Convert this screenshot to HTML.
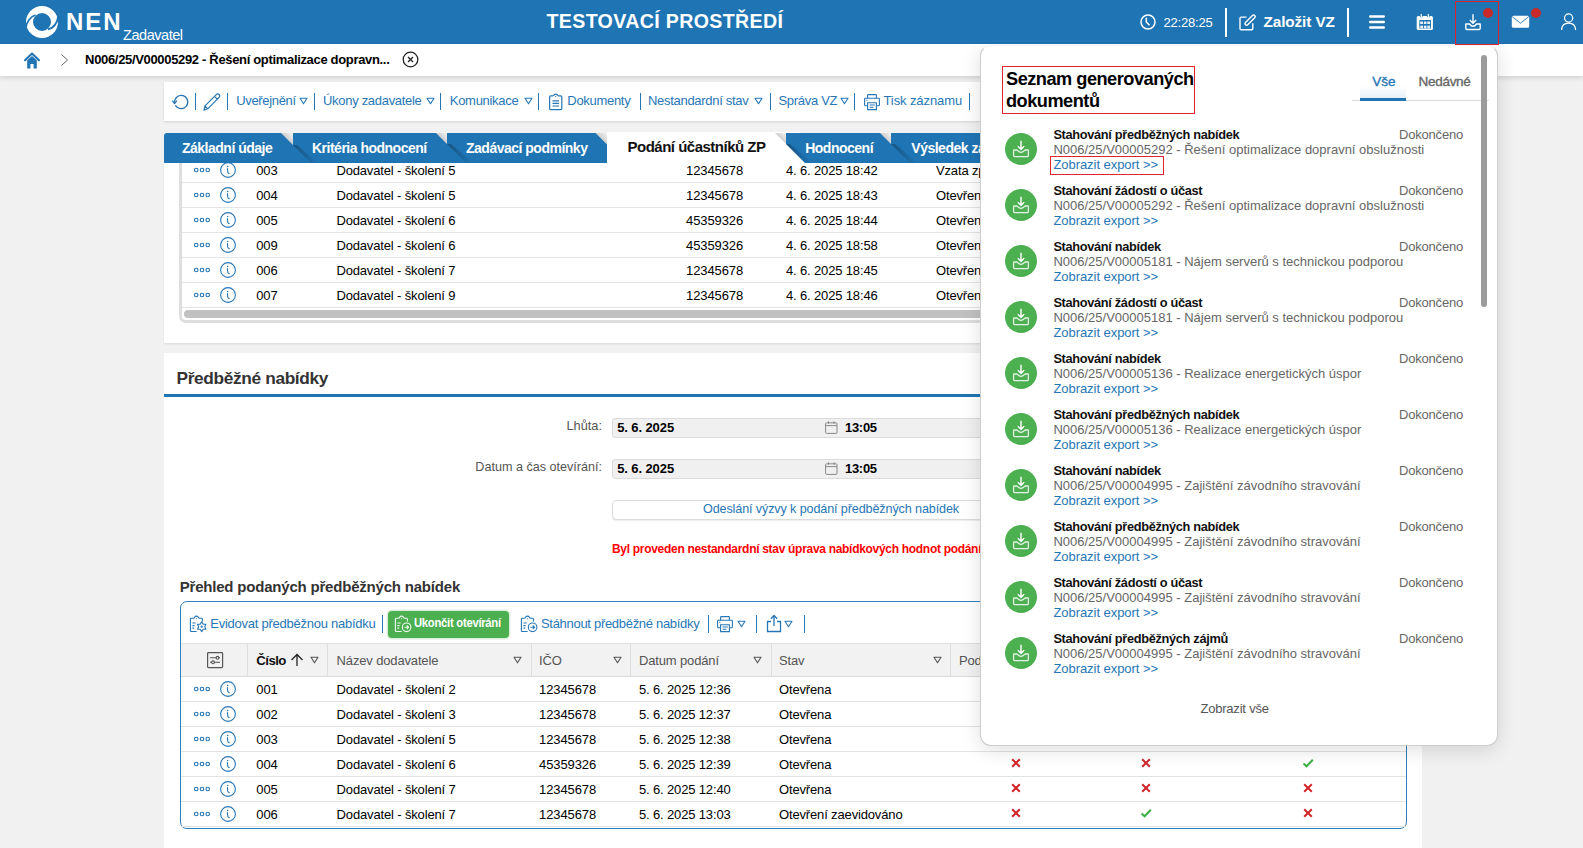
<!DOCTYPE html>
<html><head><meta charset="utf-8">
<style>
*{box-sizing:border-box;margin:0;padding:0}
html,body{width:1583px;height:848px;overflow:hidden}
body{background:#f1f1f1;font-family:"Liberation Sans",sans-serif;font-size:13px;color:#000;position:relative}
.a{position:absolute;white-space:nowrap;line-height:16px}
svg.a{overflow:visible}
.b{font-weight:bold}
.lk{color:#2777b6}
.sep{position:absolute;width:2px;background:#2777b6}
.rl{position:absolute;height:1px;background:#e3e3e3}
</style></head><body>
<div style="position:absolute;left:0;top:0;width:1583px;height:44px;background:#1f74b4"></div>
<svg class="a" style="left:0;top:0" width="70" height="44" viewBox="0 0 70 44">
<circle cx="42" cy="22" r="12.5" fill="none" stroke="#fff" stroke-width="7"/>
<path d="M25.8,28 C27,20.5 30.5,16.8 35.5,15" fill="none" stroke="#1f74b4" stroke-width="1.8"/>
<path d="M58.2,16.5 C57,24 53,28.2 48,29.3" fill="none" stroke="#1f74b4" stroke-width="1.8"/>
</svg>
<div class="a b" style="left:66.00px;top:9.68px;font-size:24px;line-height:24px;color:#fff;letter-spacing:1.9px">NEN</div>
<div class="a " style="left:123.00px;top:27.93px;font-size:14.5px;line-height:14.5px;color:#fff;letter-spacing:-0.45px">Zadavatel</div>
<div class="a b" style="left:546.50px;top:12.41px;font-size:19.6px;line-height:19.6px;color:#fff;letter-spacing:0.35px">TESTOVACÍ PROSTŘEDÍ</div>
<svg class="a" style="left:1139px;top:13px" width="18" height="18" viewBox="0 0 18 18">
<circle cx="9" cy="9" r="7" fill="none" stroke="#fff" stroke-width="1.5"/>
<path d="M7.3,4.8 L7.3,9 L10.5,12.2" fill="none" stroke="#fff" stroke-width="1.5"/>
</svg>
<div class="a " style="left:1163.50px;top:16.20px;font-size:13px;line-height:13px;color:#fff;letter-spacing:-0.2px">22:28:25</div>
<div class="sep" style="left:1225px;top:8px;height:29px;background:#fff"></div>
<svg class="a" style="left:1238px;top:13px" width="18" height="18" viewBox="0 0 18 18">
<path d="M8.5,4.1 H3.2 Q2,4.1 2,5.3 V15.6 Q2,16.8 3.2,16.8 H13.6 Q14.8,16.8 14.8,15.6 V10.2" fill="none" stroke="#fff" stroke-width="1.4"/>
<path d="M8.6,10.6 L15.6,3.6" stroke="#fff" stroke-width="4.6" stroke-linecap="round"/>
<path d="M8.6,10.6 L15.6,3.6" stroke="#1f74b4" stroke-width="1.8" stroke-linecap="round"/>
</svg>
<div class="a b" style="left:1263.50px;top:14.25px;font-size:15.3px;line-height:15.3px;color:#fff;letter-spacing:-0.1px">Založit VZ</div>
<div class="sep" style="left:1347px;top:8px;height:29px;background:#fff"></div>
<svg class="a" style="left:1368px;top:14px" width="18" height="16" viewBox="0 0 18 16">
<path d="M2.2,2.5 H15.8 M2.2,8 H15.8 M2.2,13.5 H15.8" stroke="#fff" stroke-width="2.4" stroke-linecap="round"/>
</svg>
<svg class="a" style="left:1416px;top:13px" width="18" height="18" viewBox="0 0 18 18">
<rect x="0.7" y="2.9" width="16.2" height="14.2" rx="1.5" fill="#fff"/>
<rect x="3.4" y="7" width="11.6" height="8.5" fill="#1f74b4"/>
<rect x="3.9" y="0.6" width="2.6" height="3.6" fill="#1f74b4"/>
<rect x="11" y="0.6" width="2.6" height="3.6" fill="#1f74b4"/>
<rect x="4.6" y="1" width="1.2" height="3.8" fill="#fff"/>
<rect x="11.7" y="1" width="1.2" height="3.8" fill="#fff"/>
<path d="M4.2,9.8 H7 M7.9,9.8 H10.5 M11.3,9.8 H14.1 M4.2,13.9 H7 M7.9,13.9 H10.5 M11.3,13.9 H14.1" stroke="#fff" stroke-opacity=".9" stroke-width="2.6"/>
<path d="M3.4,11.8 H15" stroke="#1f74b4" stroke-width="1"/>
</svg>
<div style="position:absolute;left:1455px;top:1px;width:44px;height:44px;border:1.5px solid #e0232d;z-index:20"></div>
<svg class="a" style="left:1464px;top:13px" width="18" height="18" viewBox="0 0 18 18">
<path d="M9,1.2 V10 M5.8,7 L9,10.2 L12.2,7" fill="none" stroke="#fff" stroke-width="1.4"/>
<path d="M1.8,11 V15.2 Q1.8,16.5 3,16.5 H15 Q16.2,16.5 16.2,15.2 V11 H12.5 Q11,13.3 9,13.3 Q7,13.3 5.5,11 Z" fill="none" stroke="#fff" stroke-width="1.4" stroke-linejoin="round"/>
</svg>
<div style="position:absolute;left:1483px;top:8px;width:10px;height:10px;border-radius:50%;background:#c92a2a"></div>
<svg class="a" style="left:1511px;top:15px" width="19" height="14" viewBox="0 0 19 14">
<rect x="0.8" y="0.8" width="17.4" height="12" rx="1.6" fill="#fff"/>
<path d="M1.2,1.6 L9.5,8.2 L17.8,1.6" fill="none" stroke="#1f74b4" stroke-width="0.9"/>
</svg>
<div style="position:absolute;left:1531px;top:8px;width:10px;height:10px;border-radius:50%;background:#c92a2a"></div>
<svg class="a" style="left:1560px;top:13px" width="18" height="18" viewBox="0 0 18 18">
<circle cx="8.6" cy="5" r="4.1" fill="none" stroke="#fff" stroke-width="1.2"/>
<path d="M1.6,17 Q1.9,10.2 8.6,10.2 Q15.3,10.2 15.6,17" fill="none" stroke="#fff" stroke-width="1.2"/>
</svg>
<div style="position:absolute;left:0;top:44px;width:1583px;height:32px;background:#fff;box-shadow:0 2px 5px rgba(0,0,0,.13)"></div>
<svg class="a" style="left:24px;top:51.5px" width="16" height="17" viewBox="0 0 16 17">
<path d="M1,8.2 L8,1.6 L15,8.2" fill="none" stroke="#1f74b4" stroke-width="2.1" stroke-linejoin="round" stroke-linecap="round"/>
<path d="M3.2,8.3 L8,4 L12.8,8.3 V16.5 H9.6 V12 H6.4 V16.5 H3.2 Z" fill="#1f74b4"/>
</svg>
<svg class="a" style="left:60px;top:53px" width="10" height="14" viewBox="0 0 10 14">
<path d="M1.5,1.5 L7.5,7 L1.5,12.5" fill="none" stroke="#666" stroke-width="1"/>
</svg>
<div class="a b" style="left:85.10px;top:53.40px;font-size:13px;line-height:13px;letter-spacing:-0.33px">N006/25/V00005292 - Řešení optimalizace dopravn...</div>
<svg class="a" style="left:402px;top:51px" width="17" height="17" viewBox="0 0 17 17">
<circle cx="8.5" cy="8.5" r="7.3" fill="none" stroke="#222" stroke-width="1.3"/>
<path d="M6,6 L11,11 M11,6 L6,11" stroke="#222" stroke-width="1.3"/>
</svg>
<div style="position:absolute;left:164px;top:82px;width:1258px;height:39px;background:#fff;box-shadow:0 1px 2px rgba(0,0,0,.12)"></div>
<svg class="a" style="left:170px;top:92px" width="20" height="20" viewBox="0 0 20 20">
<path d="M5.4,13.2 A6.6,6.6 0 1 0 4.6,10.6" fill="none" stroke="#2777b6" stroke-width="1.3"/>
<path d="M2.3,8.7 L4.6,11.6 L6.9,8.7" fill="none" stroke="#2777b6" stroke-width="1.3" stroke-linejoin="round"/>
</svg>
<div class="sep" style="left:195px;top:93px;height:17px;width:1.2px"></div>
<svg class="a" style="left:202px;top:92px" width="20" height="20" viewBox="0 0 20 20">
<path d="M2,18.2 L3,13.8 L14.5,2.3 Q15.8,1.2 17.2,2.5 Q18.4,3.8 17.3,5.2 L5.8,16.8 Z M12.5,4.3 L15.5,7.3 M3,13.8 L5.8,16.8" fill="none" stroke="#2777b6" stroke-width="1.2" stroke-linejoin="round"/>
</svg>
<div class="sep" style="left:227px;top:93px;height:17px;width:1.2px"></div>
<div class="a " style="left:236.30px;top:94.20px;font-size:13px;line-height:13px;color:#2777b6;letter-spacing:-0.35px">Uveřejnění</div>
<svg class="a" style="left:299px;top:96.8px" width="9" height="8" viewBox="0 0 9 8"><path d="M1,1.2 H8 L4.5,6.8 Z" fill="none" stroke="#2777b6" stroke-width="1.1" stroke-linejoin="round"/></svg>
<div class="sep" style="left:314px;top:93px;height:17px;width:1.2px"></div>
<div class="a " style="left:323.00px;top:94.20px;font-size:13px;line-height:13px;color:#2777b6;letter-spacing:-0.3px">Úkony zadavatele</div>
<svg class="a" style="left:425.5px;top:96.8px" width="9" height="8" viewBox="0 0 9 8"><path d="M1,1.2 H8 L4.5,6.8 Z" fill="none" stroke="#2777b6" stroke-width="1.1" stroke-linejoin="round"/></svg>
<div class="sep" style="left:440px;top:93px;height:17px;width:1.2px"></div>
<div class="a " style="left:449.80px;top:94.20px;font-size:13px;line-height:13px;color:#2777b6;letter-spacing:-0.3px">Komunikace</div>
<svg class="a" style="left:523.5px;top:96.8px" width="9" height="8" viewBox="0 0 9 8"><path d="M1,1.2 H8 L4.5,6.8 Z" fill="none" stroke="#2777b6" stroke-width="1.1" stroke-linejoin="round"/></svg>
<div class="sep" style="left:538px;top:93px;height:17px;width:1.2px"></div>
<svg class="a" style="left:546px;top:92px" width="18" height="20" viewBox="0 0 18 20">
<path d="M6.8,3.9 H4.6 Q3.6,3.9 3.6,4.9 V16.8 Q3.6,17.6 4.6,17.6 H15 Q15.8,17.6 15.8,16.8 V4.9 Q15.8,3.9 14.8,3.9 H12.6 Q12,3.8 11.5,3 Q10.6,2.2 9.7,2.2 Q8.8,2.2 8,3 Q7.5,3.8 6.8,3.9 Z" fill="none" stroke="#2777b6" stroke-width="1.2"/>
<circle cx="9.7" cy="4.6" r="0.6" fill="#2777b6"/>
<path d="M6.5,8.9 H13 M6.5,11.4 H13 M6.5,14 H13" stroke="#2777b6" stroke-width="1.1"/>
</svg>
<div class="a " style="left:567.30px;top:94.20px;font-size:13px;line-height:13px;color:#2777b6;letter-spacing:-0.3px">Dokumenty</div>
<div class="sep" style="left:639.5px;top:93px;height:17px;width:1.2px"></div>
<div class="a " style="left:648.00px;top:94.20px;font-size:13px;line-height:13px;color:#2777b6;letter-spacing:-0.3px">Nestandardní stav</div>
<svg class="a" style="left:753.5px;top:96.8px" width="9" height="8" viewBox="0 0 9 8"><path d="M1,1.2 H8 L4.5,6.8 Z" fill="none" stroke="#2777b6" stroke-width="1.1" stroke-linejoin="round"/></svg>
<div class="sep" style="left:769.5px;top:93px;height:17px;width:1.2px"></div>
<div class="a " style="left:778.50px;top:94.20px;font-size:13px;line-height:13px;color:#2777b6;letter-spacing:-0.3px">Správa VZ</div>
<svg class="a" style="left:840px;top:96.8px" width="9" height="8" viewBox="0 0 9 8"><path d="M1,1.2 H8 L4.5,6.8 Z" fill="none" stroke="#2777b6" stroke-width="1.1" stroke-linejoin="round"/></svg>
<div class="sep" style="left:854.2px;top:93px;height:17px;width:1.2px"></div>
<svg class="a" style="left:863px;top:93px" width="18" height="18" viewBox="0 0 18 18">
<path d="M4.6,5.2 V2.2 Q4.6,1.6 5.2,1.6 H12.8 Q13.4,1.6 13.4,2.2 V5.2" fill="none" stroke="#2777b6" stroke-width="1.1"/>
<path d="M4.4,12.8 H2.4 Q1.6,12.8 1.6,12 V6 Q1.6,5.2 2.4,5.2 H15.6 Q16.4,5.2 16.4,6 V12 Q16.4,12.8 15.6,12.8 H13.6" fill="none" stroke="#2777b6" stroke-width="1.1"/>
<path d="M4.6,9.8 H13.4 V16.6 H4.6 Z" fill="none" stroke="#2777b6" stroke-width="1.1"/>
<path d="M6.6,12 H11.8 M6.6,14.3 H10.4 M3.2,7.3 H4.4" stroke="#2777b6" stroke-width="1"/>
</svg>
<div class="a " style="left:883.50px;top:94.20px;font-size:13px;line-height:13px;color:#2777b6;letter-spacing:-0.1px">Tisk záznamu</div>
<div class="sep" style="left:969.2px;top:93px;height:17px;width:1.2px"></div>
<svg class="a" style="left:0;top:0" width="1583" height="170" viewBox="0 0 1583 170"><defs><linearGradient id="ng" x1="1" y1="0" x2="0.5" y2="0.5"><stop offset="0" stop-color="#f3f3f3"/><stop offset="1" stop-color="#cfcfcf"/></linearGradient><linearGradient id="sh" x1="0" y1="0" x2="1" y2="0"><stop offset="0" stop-color="#000" stop-opacity="0.28"/><stop offset="1" stop-color="#000" stop-opacity="0"/></linearGradient></defs><path d="M164,136 Q164,133 167,133 L306,133 L336,163 L164,163 Z" fill="#1f74b4"/><path d="M293,133 L461,133 L491,163 L312,163 L293,144 Z" fill="#1f74b4"/><path d="M281,133 L293,133 L293,145 Z" fill="url(#ng)"/><path d="M293,145 L311,163 L318,163 L297,145 Z" fill="url(#sh)"/><path d="M447,133 L620.5,133 L650.5,163 L466,163 L447,144 Z" fill="#1f74b4"/><path d="M436,133 L447,133 L447,144 Z" fill="url(#ng)"/><path d="M447,144 L466,163 L473,163 L451,144 Z" fill="url(#sh)"/><path d="M607,132 L800,132 L831,163 L607,163 Z" fill="#ffffff"/><path d="M595.5,133 L607,133 L607,144.5 Z" fill="url(#ng)"/><path d="M786,133 L905,133 L935,163 L805,163 L786,144 Z" fill="#1f74b4"/><path d="M775,133 L786,133 L786,144 Z" fill="url(#ng)"/><path d="M786,144 L805,163 L812,163 L790,144 Z" fill="url(#sh)"/><path d="M891,133 L1125,133 L1155,163 L910,163 L891,144 Z" fill="#1f74b4"/><path d="M880,133 L891,133 L891,144 Z" fill="url(#ng)"/><path d="M891,144 L910,163 L917,163 L895,144 Z" fill="url(#sh)"/></svg>
<div class="a b" style="left:182.00px;top:141.15px;font-size:14px;line-height:14px;color:#fff;letter-spacing:-0.5px">Základní údaje</div>
<div class="a b" style="left:312.00px;top:141.15px;font-size:14px;line-height:14px;color:#fff;letter-spacing:-0.5px">Kritéria hodnocení</div>
<div class="a b" style="left:466.00px;top:141.15px;font-size:14px;line-height:14px;color:#fff;letter-spacing:-0.5px">Zadávací podmínky</div>
<div class="a b" style="left:627.50px;top:139.30px;font-size:15px;line-height:15px;color:#111;letter-spacing:-0.5px">Podání účastníků ZP</div>
<div class="a b" style="left:805.20px;top:141.15px;font-size:14px;line-height:14px;color:#fff;letter-spacing:-0.5px">Hodnocení</div>
<div class="a b" style="left:911.30px;top:141.15px;font-size:14px;line-height:14px;color:#fff;letter-spacing:-0.5px">Výsledek zadávacího řízení</div>
<div style="position:absolute;left:164px;top:163px;width:1258px;height:180px;background:#fff;box-shadow:0 1px 2px rgba(0,0,0,.1)"></div>
<div style="position:absolute;left:178.5px;top:163px;width:1230px;height:159.5px;border:3px solid #dedede;border-top:none;border-radius:0 0 7px 7px"></div>
<div style="position:absolute;left:184px;top:310px;width:1220px;height:8px;border-radius:4px;background:#c1c1c1"></div>
<svg class="a" style="left:190px;top:160px" width="50" height="20" viewBox="0 0 50 20"><circle cx="6.2" cy="10" r="1.75" fill="none" stroke="#2777b6" stroke-width="1.15"/><circle cx="12" cy="10" r="1.75" fill="none" stroke="#2777b6" stroke-width="1.15"/><circle cx="17.7" cy="10" r="1.75" fill="none" stroke="#2777b6" stroke-width="1.15"/><circle cx="38" cy="10" r="7.4" fill="none" stroke="#2777b6" stroke-width="1.1"/><circle cx="37.7" cy="6.4" r="0.75" fill="#2777b6"/><path d="M37.4,8.6 Q37.6,11 37.8,12.2 Q38.2,13.3 39.2,13.6" fill="none" stroke="#2777b6" stroke-width="1.1" stroke-linecap="round"/></svg>
<div class="a " style="left:256.20px;top:164.20px;font-size:13px;line-height:13px;letter-spacing:-0.1px">003</div>
<div class="a " style="left:336.40px;top:164.20px;font-size:13px;line-height:13px;letter-spacing:-0.15px">Dodavatel - školení 5</div>
<div class="a " style="left:686.00px;top:164.20px;font-size:13px;line-height:13px;letter-spacing:-0.1px">12345678</div>
<div class="a " style="left:786.00px;top:164.20px;font-size:13px;line-height:13px;letter-spacing:-0.15px">4. 6. 2025 18:42</div>
<div class="a " style="left:936.00px;top:164.20px;font-size:13px;line-height:13px;letter-spacing:-0.15px">Vzata zpět</div>
<div class="rl" style="left:181.5px;top:182px;width:1224px;background:#e4e4e4"></div>
<svg class="a" style="left:190px;top:185px" width="50" height="20" viewBox="0 0 50 20"><circle cx="6.2" cy="10" r="1.75" fill="none" stroke="#2777b6" stroke-width="1.15"/><circle cx="12" cy="10" r="1.75" fill="none" stroke="#2777b6" stroke-width="1.15"/><circle cx="17.7" cy="10" r="1.75" fill="none" stroke="#2777b6" stroke-width="1.15"/><circle cx="38" cy="10" r="7.4" fill="none" stroke="#2777b6" stroke-width="1.1"/><circle cx="37.7" cy="6.4" r="0.75" fill="#2777b6"/><path d="M37.4,8.6 Q37.6,11 37.8,12.2 Q38.2,13.3 39.2,13.6" fill="none" stroke="#2777b6" stroke-width="1.1" stroke-linecap="round"/></svg>
<div class="a " style="left:256.20px;top:189.20px;font-size:13px;line-height:13px;letter-spacing:-0.1px">004</div>
<div class="a " style="left:336.40px;top:189.20px;font-size:13px;line-height:13px;letter-spacing:-0.15px">Dodavatel - školení 5</div>
<div class="a " style="left:686.00px;top:189.20px;font-size:13px;line-height:13px;letter-spacing:-0.1px">12345678</div>
<div class="a " style="left:786.00px;top:189.20px;font-size:13px;line-height:13px;letter-spacing:-0.15px">4. 6. 2025 18:43</div>
<div class="a " style="left:936.00px;top:189.20px;font-size:13px;line-height:13px;letter-spacing:-0.15px">Otevřena</div>
<div class="rl" style="left:181.5px;top:207px;width:1224px;background:#e4e4e4"></div>
<svg class="a" style="left:190px;top:210px" width="50" height="20" viewBox="0 0 50 20"><circle cx="6.2" cy="10" r="1.75" fill="none" stroke="#2777b6" stroke-width="1.15"/><circle cx="12" cy="10" r="1.75" fill="none" stroke="#2777b6" stroke-width="1.15"/><circle cx="17.7" cy="10" r="1.75" fill="none" stroke="#2777b6" stroke-width="1.15"/><circle cx="38" cy="10" r="7.4" fill="none" stroke="#2777b6" stroke-width="1.1"/><circle cx="37.7" cy="6.4" r="0.75" fill="#2777b6"/><path d="M37.4,8.6 Q37.6,11 37.8,12.2 Q38.2,13.3 39.2,13.6" fill="none" stroke="#2777b6" stroke-width="1.1" stroke-linecap="round"/></svg>
<div class="a " style="left:256.20px;top:214.20px;font-size:13px;line-height:13px;letter-spacing:-0.1px">005</div>
<div class="a " style="left:336.40px;top:214.20px;font-size:13px;line-height:13px;letter-spacing:-0.15px">Dodavatel - školení 6</div>
<div class="a " style="left:686.00px;top:214.20px;font-size:13px;line-height:13px;letter-spacing:-0.1px">45359326</div>
<div class="a " style="left:786.00px;top:214.20px;font-size:13px;line-height:13px;letter-spacing:-0.15px">4. 6. 2025 18:44</div>
<div class="a " style="left:936.00px;top:214.20px;font-size:13px;line-height:13px;letter-spacing:-0.15px">Otevřena</div>
<div class="rl" style="left:181.5px;top:232px;width:1224px;background:#e4e4e4"></div>
<svg class="a" style="left:190px;top:235px" width="50" height="20" viewBox="0 0 50 20"><circle cx="6.2" cy="10" r="1.75" fill="none" stroke="#2777b6" stroke-width="1.15"/><circle cx="12" cy="10" r="1.75" fill="none" stroke="#2777b6" stroke-width="1.15"/><circle cx="17.7" cy="10" r="1.75" fill="none" stroke="#2777b6" stroke-width="1.15"/><circle cx="38" cy="10" r="7.4" fill="none" stroke="#2777b6" stroke-width="1.1"/><circle cx="37.7" cy="6.4" r="0.75" fill="#2777b6"/><path d="M37.4,8.6 Q37.6,11 37.8,12.2 Q38.2,13.3 39.2,13.6" fill="none" stroke="#2777b6" stroke-width="1.1" stroke-linecap="round"/></svg>
<div class="a " style="left:256.20px;top:239.20px;font-size:13px;line-height:13px;letter-spacing:-0.1px">009</div>
<div class="a " style="left:336.40px;top:239.20px;font-size:13px;line-height:13px;letter-spacing:-0.15px">Dodavatel - školení 6</div>
<div class="a " style="left:686.00px;top:239.20px;font-size:13px;line-height:13px;letter-spacing:-0.1px">45359326</div>
<div class="a " style="left:786.00px;top:239.20px;font-size:13px;line-height:13px;letter-spacing:-0.15px">4. 6. 2025 18:58</div>
<div class="a " style="left:936.00px;top:239.20px;font-size:13px;line-height:13px;letter-spacing:-0.15px">Otevřena</div>
<div class="rl" style="left:181.5px;top:257px;width:1224px;background:#e4e4e4"></div>
<svg class="a" style="left:190px;top:260px" width="50" height="20" viewBox="0 0 50 20"><circle cx="6.2" cy="10" r="1.75" fill="none" stroke="#2777b6" stroke-width="1.15"/><circle cx="12" cy="10" r="1.75" fill="none" stroke="#2777b6" stroke-width="1.15"/><circle cx="17.7" cy="10" r="1.75" fill="none" stroke="#2777b6" stroke-width="1.15"/><circle cx="38" cy="10" r="7.4" fill="none" stroke="#2777b6" stroke-width="1.1"/><circle cx="37.7" cy="6.4" r="0.75" fill="#2777b6"/><path d="M37.4,8.6 Q37.6,11 37.8,12.2 Q38.2,13.3 39.2,13.6" fill="none" stroke="#2777b6" stroke-width="1.1" stroke-linecap="round"/></svg>
<div class="a " style="left:256.20px;top:264.20px;font-size:13px;line-height:13px;letter-spacing:-0.1px">006</div>
<div class="a " style="left:336.40px;top:264.20px;font-size:13px;line-height:13px;letter-spacing:-0.15px">Dodavatel - školení 7</div>
<div class="a " style="left:686.00px;top:264.20px;font-size:13px;line-height:13px;letter-spacing:-0.1px">12345678</div>
<div class="a " style="left:786.00px;top:264.20px;font-size:13px;line-height:13px;letter-spacing:-0.15px">4. 6. 2025 18:45</div>
<div class="a " style="left:936.00px;top:264.20px;font-size:13px;line-height:13px;letter-spacing:-0.15px">Otevřena</div>
<div class="rl" style="left:181.5px;top:282px;width:1224px;background:#e4e4e4"></div>
<svg class="a" style="left:190px;top:285px" width="50" height="20" viewBox="0 0 50 20"><circle cx="6.2" cy="10" r="1.75" fill="none" stroke="#2777b6" stroke-width="1.15"/><circle cx="12" cy="10" r="1.75" fill="none" stroke="#2777b6" stroke-width="1.15"/><circle cx="17.7" cy="10" r="1.75" fill="none" stroke="#2777b6" stroke-width="1.15"/><circle cx="38" cy="10" r="7.4" fill="none" stroke="#2777b6" stroke-width="1.1"/><circle cx="37.7" cy="6.4" r="0.75" fill="#2777b6"/><path d="M37.4,8.6 Q37.6,11 37.8,12.2 Q38.2,13.3 39.2,13.6" fill="none" stroke="#2777b6" stroke-width="1.1" stroke-linecap="round"/></svg>
<div class="a " style="left:256.20px;top:289.20px;font-size:13px;line-height:13px;letter-spacing:-0.1px">007</div>
<div class="a " style="left:336.40px;top:289.20px;font-size:13px;line-height:13px;letter-spacing:-0.15px">Dodavatel - školení 9</div>
<div class="a " style="left:686.00px;top:289.20px;font-size:13px;line-height:13px;letter-spacing:-0.1px">12345678</div>
<div class="a " style="left:786.00px;top:289.20px;font-size:13px;line-height:13px;letter-spacing:-0.15px">4. 6. 2025 18:46</div>
<div class="a " style="left:936.00px;top:289.20px;font-size:13px;line-height:13px;letter-spacing:-0.15px">Otevřena</div>
<div class="rl" style="left:181.5px;top:307px;width:1224px;background:#e4e4e4"></div>
<div style="position:absolute;left:164px;top:353px;width:1258px;height:500px;background:#fff"></div>
<div class="a b" style="left:176.50px;top:370.16px;font-size:17.3px;line-height:17.3px;color:#333;letter-spacing:-0.35px">Předběžné nabídky</div>
<div style="position:absolute;left:164px;top:394px;width:1258px;height:3px;background:#1f74b4"></div>
<div class="a " style="right:981.00px;top:419.66px;font-size:12.8px;line-height:12.8px;color:#555">Lhůta:</div>
<div class="a " style="right:981.00px;top:460.63px;font-size:12.6px;line-height:12.6px;color:#555">Datum a čas otevírání:</div>
<div style="position:absolute;left:612px;top:417.5px;width:700px;height:20px;background:#f0f0f0;border:1px solid #dcdcdc;border-radius:3px"></div>
<div class="a b" style="left:617.20px;top:421.20px;font-size:13px;line-height:13px;letter-spacing:-0.1px">5. 6. 2025</div>
<svg class="a" style="left:824.5px;top:421.0px" width="13" height="13" viewBox="0 0 13 13"><rect x="0.6" y="1.8" width="11.4" height="10.6" rx="1" fill="none" stroke="#888" stroke-width="1"/><path d="M0.6,4.6 H12 M3.5,0.3 V2.8 M9,0.3 V2.8" stroke="#888" stroke-width="1"/></svg>
<div class="a b" style="left:845.00px;top:421.20px;font-size:13px;line-height:13px;letter-spacing:-0.3px">13:05</div>
<div style="position:absolute;left:612px;top:458.5px;width:700px;height:20px;background:#f0f0f0;border:1px solid #dcdcdc;border-radius:3px"></div>
<div class="a b" style="left:617.20px;top:462.20px;font-size:13px;line-height:13px;letter-spacing:-0.1px">5. 6. 2025</div>
<svg class="a" style="left:824.5px;top:462.0px" width="13" height="13" viewBox="0 0 13 13"><rect x="0.6" y="1.8" width="11.4" height="10.6" rx="1" fill="none" stroke="#888" stroke-width="1"/><path d="M0.6,4.6 H12 M3.5,0.3 V2.8 M9,0.3 V2.8" stroke="#888" stroke-width="1"/></svg>
<div class="a b" style="left:845.00px;top:462.20px;font-size:13px;line-height:13px;letter-spacing:-0.3px">13:05</div>
<div style="position:absolute;left:612px;top:500px;width:700px;height:20px;background:#fff;border:1px solid #dcdcdc;border-radius:4px;box-shadow:0 1px 1px rgba(0,0,0,.08)"></div>
<div class="a " style="left:703.00px;top:502.73px;font-size:12.6px;line-height:12.6px;color:#2777b6;letter-spacing:-0.12px">Odeslání výzvy k podání předběžných nabídek</div>
<div class="a b" style="left:612.00px;top:542.74px;font-size:12px;line-height:12px;color:#ff0000;letter-spacing:-0.3px">Byl proveden nestandardní stav úprava nabídkových hodnot podání</div>
<div class="a b" style="left:179.70px;top:579.10px;font-size:15px;line-height:15px;color:#333;letter-spacing:-0.2px">Přehled podaných předběžných nabídek</div>
<div style="position:absolute;left:179.5px;top:601.3px;width:1227.5px;height:227.8px;border:1.5px solid #2f7fbd;border-radius:7px;background:#fff"></div>
<svg class="a" style="left:189px;top:614px" width="19" height="19" viewBox="0 0 19 19">
<path d="M7.6,17.5 H2.2 Q1.4,17.5 1.4,16.7 V5.1 Q1.4,4.3 2.2,4.3 H4.4 Q5.1,4.2 5.6,3.2 Q6.3,2.1 7.5,2.1 Q8.7,2.1 9.4,3.2 Q9.9,4.2 10.6,4.3 H12.6 Q13.4,4.3 13.4,5.1 V7.4" fill="none" stroke="#2777b6" stroke-width="1.1"/>
<circle cx="7.5" cy="4.7" r="0.55" fill="#2777b6"/>
<path d="M3.4,9 H6.6 M3.4,11.6 H5.6 M3.4,14.1 H5.2" stroke="#2777b6" stroke-width="1.1"/>
<path d="M12.70,7.80 L14.20,10.10 L16.94,10.25 L15.70,12.70 L16.94,15.15 L14.20,15.30 L12.70,17.60 L11.20,15.30 L8.46,15.15 L9.70,12.70 L8.46,10.25 L11.20,10.10 Z" fill="#fff" stroke="#2777b6" stroke-width="1.1" stroke-linejoin="round"/>
<circle cx="12.7" cy="12.7" r="1.1" fill="#2777b6"/>
</svg>
<div class="a " style="left:210.30px;top:616.80px;font-size:13px;line-height:13px;color:#2777b6;letter-spacing:-0.25px">Evidovat předběžnou nabídku</div>
<div class="sep" style="left:382px;top:615px;height:18px;width:1.2px"></div>
<div style="position:absolute;left:387.5px;top:610.5px;width:121px;height:27px;background:#4caf50;border-radius:4px;box-shadow:0 0 0 1.5px #dcefdc"></div>
<svg class="a" style="left:393.5px;top:613.5px" width="19" height="19" viewBox="0 0 19 19">
<path d="M7.6,17.5 H2.2 Q1.4,17.5 1.4,16.7 V5.1 Q1.4,4.3 2.2,4.3 H4.4 Q5.1,4.2 5.6,3.2 Q6.3,2.1 7.5,2.1 Q8.7,2.1 9.4,3.2 Q9.9,4.2 10.6,4.3 H12.6 Q13.4,4.3 13.4,5.1 V7.4" fill="none" stroke="#f2fbf2" stroke-width="1.1"/>
<circle cx="7.5" cy="4.7" r="0.55" fill="#f2fbf2"/>
<path d="M3.4,9 H6.6 M3.4,11.6 H5.6 M3.4,14.1 H5.2" stroke="#f2fbf2" stroke-width="1.1"/>
<circle cx="12.6" cy="13.3" r="4.3" fill="#4caf50" stroke="#f2fbf2" stroke-width="1.1"/>
<path d="M10.4,13.3 H14.6 M12.8,11.5 L14.6,13.3 L12.8,15.1" fill="none" stroke="#f2fbf2" stroke-width="1.1"/>
</svg>
<div class="a b" style="left:413.90px;top:616.80px;font-size:12.4px;line-height:12.4px;color:#fff;letter-spacing:-0.3px;transform:scaleX(0.91);transform-origin:0 0">Ukončit otevírání</div>
<svg class="a" style="left:519.7px;top:614px" width="19" height="19" viewBox="0 0 19 19">
<path d="M7.6,17.5 H2.2 Q1.4,17.5 1.4,16.7 V5.1 Q1.4,4.3 2.2,4.3 H4.4 Q5.1,4.2 5.6,3.2 Q6.3,2.1 7.5,2.1 Q8.7,2.1 9.4,3.2 Q9.9,4.2 10.6,4.3 H12.6 Q13.4,4.3 13.4,5.1 V7.4" fill="none" stroke="#2777b6" stroke-width="1.1"/>
<circle cx="7.5" cy="4.7" r="0.55" fill="#2777b6"/>
<path d="M3.4,9 H6.6 M3.4,11.6 H5.6 M3.4,14.1 H5.2" stroke="#2777b6" stroke-width="1.1"/>
<circle cx="12.6" cy="13.3" r="4.3" fill="#fff" stroke="#2777b6" stroke-width="1.1"/>
<path d="M10.4,13.3 H14.6 M12.8,11.5 L14.6,13.3 L12.8,15.1" fill="none" stroke="#2777b6" stroke-width="1.1"/>
</svg>
<div class="a " style="left:541.00px;top:616.80px;font-size:13px;line-height:13px;color:#2777b6;letter-spacing:-0.3px">Stáhnout předběžné nabídky</div>
<div class="sep" style="left:708px;top:615px;height:18px;width:1.2px"></div>
<svg class="a" style="left:716px;top:615px" width="18" height="18" viewBox="0 0 18 18">
<path d="M4.6,5.2 V2.2 Q4.6,1.6 5.2,1.6 H12.8 Q13.4,1.6 13.4,2.2 V5.2" fill="none" stroke="#2777b6" stroke-width="1.1"/>
<path d="M4.4,12.8 H2.4 Q1.6,12.8 1.6,12 V6 Q1.6,5.2 2.4,5.2 H15.6 Q16.4,5.2 16.4,6 V12 Q16.4,12.8 15.6,12.8 H13.6" fill="none" stroke="#2777b6" stroke-width="1.1"/>
<path d="M4.6,9.8 H13.4 V16.6 H4.6 Z" fill="none" stroke="#2777b6" stroke-width="1.1"/>
<path d="M6.6,12 H11.8 M6.6,14.3 H10.4 M3.2,7.3 H4.4" stroke="#2777b6" stroke-width="1"/>
</svg>
<svg class="a" style="left:736.8px;top:620px" width="9" height="8" viewBox="0 0 9 8"><path d="M1,1.2 H8 L4.5,6.8 Z" fill="none" stroke="#2777b6" stroke-width="1.1" stroke-linejoin="round"/></svg>
<div class="sep" style="left:756px;top:615px;height:18px;width:1.2px"></div>
<svg class="a" style="left:766px;top:614px" width="16" height="19" viewBox="0 0 16 19">
<path d="M5,7.5 H1.5 V17.5 H14.5 V7.5 H11" fill="none" stroke="#2777b6" stroke-width="1.3"/>
<path d="M8,12 V1.5 M4.8,4.7 L8,1.5 L11.2,4.7" fill="none" stroke="#2777b6" stroke-width="1.3"/>
</svg>
<svg class="a" style="left:783.5px;top:620px" width="9" height="8" viewBox="0 0 9 8"><path d="M1,1.2 H8 L4.5,6.8 Z" fill="none" stroke="#2777b6" stroke-width="1.1" stroke-linejoin="round"/></svg>
<div class="sep" style="left:803.5px;top:615px;height:18px;width:1.2px"></div>
<div style="position:absolute;left:181px;top:643px;width:1224.5px;height:33.5px;background:#f2f2f2;border-top:1px solid #e0e0e0;border-bottom:1px solid #dcdcdc"></div>
<div style="position:absolute;left:247px;top:644px;width:1px;height:32px;background:#dedede"></div>
<div style="position:absolute;left:327px;top:644px;width:1px;height:32px;background:#dedede"></div>
<div style="position:absolute;left:530.5px;top:644px;width:1px;height:32px;background:#dedede"></div>
<div style="position:absolute;left:630px;top:644px;width:1px;height:32px;background:#dedede"></div>
<div style="position:absolute;left:770.5px;top:644px;width:1px;height:32px;background:#dedede"></div>
<div style="position:absolute;left:950px;top:644px;width:1px;height:32px;background:#dedede"></div>
<div style="position:absolute;left:1080px;top:644px;width:1px;height:32px;background:#dedede"></div>
<div style="position:absolute;left:1210px;top:644px;width:1px;height:32px;background:#dedede"></div>
<svg class="a" style="left:206px;top:651px" width="18" height="18" viewBox="0 0 18 18">
<rect x="1.6" y="1.6" width="15" height="15" rx="0.8" fill="none" stroke="#555" stroke-width="1.2"/>
<path d="M4,6.8 H14 M4,11.3 H14" stroke="#555" stroke-width="1.1"/>
<circle cx="11.5" cy="6.8" r="1.4" fill="#f2f2f2" stroke="#555" stroke-width="1.1"/>
<circle cx="7" cy="11.3" r="1.4" fill="#f2f2f2" stroke="#555" stroke-width="1.1"/>
</svg>
<div class="a b" style="left:256.30px;top:653.63px;font-size:13.2px;line-height:13.2px;color:#111;letter-spacing:-0.55px">Číslo</div>
<svg class="a" style="left:290px;top:653px" width="14" height="14" viewBox="0 0 14 14">
<path d="M7,13 V1.5 M1.5,7 L7,1.5 L12.5,7" fill="none" stroke="#222" stroke-width="1.3"/>
</svg>
<svg class="a" style="left:309.5px;top:656px" width="9" height="8" viewBox="0 0 9 8"><path d="M1,1.2 H8 L4.5,6.8 Z" fill="none" stroke="#555" stroke-width="1.1" stroke-linejoin="round"/></svg>
<div class="a " style="left:336.60px;top:653.80px;font-size:13px;line-height:13px;color:#555;letter-spacing:-0.15px">Název dodavatele</div>
<svg class="a" style="left:512.5px;top:656px" width="9" height="8" viewBox="0 0 9 8"><path d="M1,1.2 H8 L4.5,6.8 Z" fill="none" stroke="#555" stroke-width="1.1" stroke-linejoin="round"/></svg>
<div class="a " style="left:539.00px;top:653.80px;font-size:13px;line-height:13px;color:#555;letter-spacing:-0.15px">IČO</div>
<svg class="a" style="left:612.5px;top:656px" width="9" height="8" viewBox="0 0 9 8"><path d="M1,1.2 H8 L4.5,6.8 Z" fill="none" stroke="#555" stroke-width="1.1" stroke-linejoin="round"/></svg>
<div class="a " style="left:639.00px;top:653.80px;font-size:13px;line-height:13px;color:#555;letter-spacing:-0.15px">Datum podání</div>
<svg class="a" style="left:753px;top:656px" width="9" height="8" viewBox="0 0 9 8"><path d="M1,1.2 H8 L4.5,6.8 Z" fill="none" stroke="#555" stroke-width="1.1" stroke-linejoin="round"/></svg>
<div class="a " style="left:779.00px;top:653.80px;font-size:13px;line-height:13px;color:#555;letter-spacing:-0.15px">Stav</div>
<svg class="a" style="left:932.5px;top:656px" width="9" height="8" viewBox="0 0 9 8"><path d="M1,1.2 H8 L4.5,6.8 Z" fill="none" stroke="#555" stroke-width="1.1" stroke-linejoin="round"/></svg>
<div class="a " style="left:959.00px;top:653.80px;font-size:13px;line-height:13px;color:#555;letter-spacing:-0.15px">Podání</div>
<svg class="a" style="left:190px;top:679px" width="50" height="20" viewBox="0 0 50 20"><circle cx="6.2" cy="10" r="1.75" fill="none" stroke="#2777b6" stroke-width="1.15"/><circle cx="12" cy="10" r="1.75" fill="none" stroke="#2777b6" stroke-width="1.15"/><circle cx="17.7" cy="10" r="1.75" fill="none" stroke="#2777b6" stroke-width="1.15"/><circle cx="38" cy="10" r="7.4" fill="none" stroke="#2777b6" stroke-width="1.1"/><circle cx="37.7" cy="6.4" r="0.75" fill="#2777b6"/><path d="M37.4,8.6 Q37.6,11 37.8,12.2 Q38.2,13.3 39.2,13.6" fill="none" stroke="#2777b6" stroke-width="1.1" stroke-linecap="round"/></svg>
<div class="a " style="left:256.30px;top:682.80px;font-size:13px;line-height:13px;letter-spacing:-0.1px">001</div>
<div class="a " style="left:336.60px;top:682.80px;font-size:13px;line-height:13px;letter-spacing:-0.15px">Dodavatel - školení 2</div>
<div class="a " style="left:539.00px;top:682.80px;font-size:13px;line-height:13px;letter-spacing:-0.1px">12345678</div>
<div class="a " style="left:639.00px;top:682.80px;font-size:13px;line-height:13px;letter-spacing:-0.15px">5. 6. 2025 12:36</div>
<div class="a " style="left:779.00px;top:682.80px;font-size:13px;line-height:13px;letter-spacing:-0.15px">Otevřena</div>
<svg class="a" style="left:1010.4px;top:681.8px" width="12" height="12" viewBox="0 0 12 12"><path d="M2.2,2.2 L9.8,9.8 M9.8,2.2 L2.2,9.8" stroke="#d0262b" stroke-width="2"/></svg>
<svg class="a" style="left:1140.3px;top:681.8px" width="12" height="12" viewBox="0 0 12 12"><path d="M2.2,2.2 L9.8,9.8 M9.8,2.2 L2.2,9.8" stroke="#d0262b" stroke-width="2"/></svg>
<svg class="a" style="left:1301.7px;top:681.8px" width="12" height="12" viewBox="0 0 12 12"><path d="M2.2,2.2 L9.8,9.8 M9.8,2.2 L2.2,9.8" stroke="#d0262b" stroke-width="2"/></svg>
<div class="rl" style="left:181px;top:701px;width:1224.5px;background:#e2e2e2"></div>
<svg class="a" style="left:190px;top:704px" width="50" height="20" viewBox="0 0 50 20"><circle cx="6.2" cy="10" r="1.75" fill="none" stroke="#2777b6" stroke-width="1.15"/><circle cx="12" cy="10" r="1.75" fill="none" stroke="#2777b6" stroke-width="1.15"/><circle cx="17.7" cy="10" r="1.75" fill="none" stroke="#2777b6" stroke-width="1.15"/><circle cx="38" cy="10" r="7.4" fill="none" stroke="#2777b6" stroke-width="1.1"/><circle cx="37.7" cy="6.4" r="0.75" fill="#2777b6"/><path d="M37.4,8.6 Q37.6,11 37.8,12.2 Q38.2,13.3 39.2,13.6" fill="none" stroke="#2777b6" stroke-width="1.1" stroke-linecap="round"/></svg>
<div class="a " style="left:256.30px;top:707.80px;font-size:13px;line-height:13px;letter-spacing:-0.1px">002</div>
<div class="a " style="left:336.60px;top:707.80px;font-size:13px;line-height:13px;letter-spacing:-0.15px">Dodavatel - školení 3</div>
<div class="a " style="left:539.00px;top:707.80px;font-size:13px;line-height:13px;letter-spacing:-0.1px">12345678</div>
<div class="a " style="left:639.00px;top:707.80px;font-size:13px;line-height:13px;letter-spacing:-0.15px">5. 6. 2025 12:37</div>
<div class="a " style="left:779.00px;top:707.80px;font-size:13px;line-height:13px;letter-spacing:-0.15px">Otevřena</div>
<svg class="a" style="left:1010.4px;top:706.8px" width="12" height="12" viewBox="0 0 12 12"><path d="M2.2,2.2 L9.8,9.8 M9.8,2.2 L2.2,9.8" stroke="#d0262b" stroke-width="2"/></svg>
<svg class="a" style="left:1140.3px;top:706.8px" width="12" height="12" viewBox="0 0 12 12"><path d="M2.2,2.2 L9.8,9.8 M9.8,2.2 L2.2,9.8" stroke="#d0262b" stroke-width="2"/></svg>
<svg class="a" style="left:1301.7px;top:706.8px" width="12" height="12" viewBox="0 0 12 12"><path d="M2.2,2.2 L9.8,9.8 M9.8,2.2 L2.2,9.8" stroke="#d0262b" stroke-width="2"/></svg>
<div class="rl" style="left:181px;top:726px;width:1224.5px;background:#e2e2e2"></div>
<svg class="a" style="left:190px;top:729px" width="50" height="20" viewBox="0 0 50 20"><circle cx="6.2" cy="10" r="1.75" fill="none" stroke="#2777b6" stroke-width="1.15"/><circle cx="12" cy="10" r="1.75" fill="none" stroke="#2777b6" stroke-width="1.15"/><circle cx="17.7" cy="10" r="1.75" fill="none" stroke="#2777b6" stroke-width="1.15"/><circle cx="38" cy="10" r="7.4" fill="none" stroke="#2777b6" stroke-width="1.1"/><circle cx="37.7" cy="6.4" r="0.75" fill="#2777b6"/><path d="M37.4,8.6 Q37.6,11 37.8,12.2 Q38.2,13.3 39.2,13.6" fill="none" stroke="#2777b6" stroke-width="1.1" stroke-linecap="round"/></svg>
<div class="a " style="left:256.30px;top:732.80px;font-size:13px;line-height:13px;letter-spacing:-0.1px">003</div>
<div class="a " style="left:336.60px;top:732.80px;font-size:13px;line-height:13px;letter-spacing:-0.15px">Dodavatel - školení 5</div>
<div class="a " style="left:539.00px;top:732.80px;font-size:13px;line-height:13px;letter-spacing:-0.1px">12345678</div>
<div class="a " style="left:639.00px;top:732.80px;font-size:13px;line-height:13px;letter-spacing:-0.15px">5. 6. 2025 12:38</div>
<div class="a " style="left:779.00px;top:732.80px;font-size:13px;line-height:13px;letter-spacing:-0.15px">Otevřena</div>
<svg class="a" style="left:1010.4px;top:731.8px" width="12" height="12" viewBox="0 0 12 12"><path d="M2.2,2.2 L9.8,9.8 M9.8,2.2 L2.2,9.8" stroke="#d0262b" stroke-width="2"/></svg>
<svg class="a" style="left:1140.3px;top:731.8px" width="12" height="12" viewBox="0 0 12 12"><path d="M2.2,2.2 L9.8,9.8 M9.8,2.2 L2.2,9.8" stroke="#d0262b" stroke-width="2"/></svg>
<svg class="a" style="left:1301.7px;top:731.8px" width="12" height="12" viewBox="0 0 12 12"><path d="M2.2,2.2 L9.8,9.8 M9.8,2.2 L2.2,9.8" stroke="#d0262b" stroke-width="2"/></svg>
<div class="rl" style="left:181px;top:751px;width:1224.5px;background:#e2e2e2"></div>
<svg class="a" style="left:190px;top:754px" width="50" height="20" viewBox="0 0 50 20"><circle cx="6.2" cy="10" r="1.75" fill="none" stroke="#2777b6" stroke-width="1.15"/><circle cx="12" cy="10" r="1.75" fill="none" stroke="#2777b6" stroke-width="1.15"/><circle cx="17.7" cy="10" r="1.75" fill="none" stroke="#2777b6" stroke-width="1.15"/><circle cx="38" cy="10" r="7.4" fill="none" stroke="#2777b6" stroke-width="1.1"/><circle cx="37.7" cy="6.4" r="0.75" fill="#2777b6"/><path d="M37.4,8.6 Q37.6,11 37.8,12.2 Q38.2,13.3 39.2,13.6" fill="none" stroke="#2777b6" stroke-width="1.1" stroke-linecap="round"/></svg>
<div class="a " style="left:256.30px;top:757.80px;font-size:13px;line-height:13px;letter-spacing:-0.1px">004</div>
<div class="a " style="left:336.60px;top:757.80px;font-size:13px;line-height:13px;letter-spacing:-0.15px">Dodavatel - školení 6</div>
<div class="a " style="left:539.00px;top:757.80px;font-size:13px;line-height:13px;letter-spacing:-0.1px">45359326</div>
<div class="a " style="left:639.00px;top:757.80px;font-size:13px;line-height:13px;letter-spacing:-0.15px">5. 6. 2025 12:39</div>
<div class="a " style="left:779.00px;top:757.80px;font-size:13px;line-height:13px;letter-spacing:-0.15px">Otevřena</div>
<svg class="a" style="left:1010.4px;top:756.8px" width="12" height="12" viewBox="0 0 12 12"><path d="M2.2,2.2 L9.8,9.8 M9.8,2.2 L2.2,9.8" stroke="#d0262b" stroke-width="2"/></svg>
<svg class="a" style="left:1140.3px;top:756.8px" width="12" height="12" viewBox="0 0 12 12"><path d="M2.2,2.2 L9.8,9.8 M9.8,2.2 L2.2,9.8" stroke="#d0262b" stroke-width="2"/></svg>
<svg class="a" style="left:1301.7px;top:756.8px" width="12" height="12" viewBox="0 0 12 12"><path d="M1.5,6.5 L4.6,9.3 L10.8,2.8" fill="none" stroke="#3cb043" stroke-width="2"/></svg>
<div class="rl" style="left:181px;top:776px;width:1224.5px;background:#e2e2e2"></div>
<svg class="a" style="left:190px;top:779px" width="50" height="20" viewBox="0 0 50 20"><circle cx="6.2" cy="10" r="1.75" fill="none" stroke="#2777b6" stroke-width="1.15"/><circle cx="12" cy="10" r="1.75" fill="none" stroke="#2777b6" stroke-width="1.15"/><circle cx="17.7" cy="10" r="1.75" fill="none" stroke="#2777b6" stroke-width="1.15"/><circle cx="38" cy="10" r="7.4" fill="none" stroke="#2777b6" stroke-width="1.1"/><circle cx="37.7" cy="6.4" r="0.75" fill="#2777b6"/><path d="M37.4,8.6 Q37.6,11 37.8,12.2 Q38.2,13.3 39.2,13.6" fill="none" stroke="#2777b6" stroke-width="1.1" stroke-linecap="round"/></svg>
<div class="a " style="left:256.30px;top:782.80px;font-size:13px;line-height:13px;letter-spacing:-0.1px">005</div>
<div class="a " style="left:336.60px;top:782.80px;font-size:13px;line-height:13px;letter-spacing:-0.15px">Dodavatel - školení 7</div>
<div class="a " style="left:539.00px;top:782.80px;font-size:13px;line-height:13px;letter-spacing:-0.1px">12345678</div>
<div class="a " style="left:639.00px;top:782.80px;font-size:13px;line-height:13px;letter-spacing:-0.15px">5. 6. 2025 12:40</div>
<div class="a " style="left:779.00px;top:782.80px;font-size:13px;line-height:13px;letter-spacing:-0.15px">Otevřena</div>
<svg class="a" style="left:1010.4px;top:781.8px" width="12" height="12" viewBox="0 0 12 12"><path d="M2.2,2.2 L9.8,9.8 M9.8,2.2 L2.2,9.8" stroke="#d0262b" stroke-width="2"/></svg>
<svg class="a" style="left:1140.3px;top:781.8px" width="12" height="12" viewBox="0 0 12 12"><path d="M2.2,2.2 L9.8,9.8 M9.8,2.2 L2.2,9.8" stroke="#d0262b" stroke-width="2"/></svg>
<svg class="a" style="left:1301.7px;top:781.8px" width="12" height="12" viewBox="0 0 12 12"><path d="M2.2,2.2 L9.8,9.8 M9.8,2.2 L2.2,9.8" stroke="#d0262b" stroke-width="2"/></svg>
<div class="rl" style="left:181px;top:801px;width:1224.5px;background:#e2e2e2"></div>
<svg class="a" style="left:190px;top:804px" width="50" height="20" viewBox="0 0 50 20"><circle cx="6.2" cy="10" r="1.75" fill="none" stroke="#2777b6" stroke-width="1.15"/><circle cx="12" cy="10" r="1.75" fill="none" stroke="#2777b6" stroke-width="1.15"/><circle cx="17.7" cy="10" r="1.75" fill="none" stroke="#2777b6" stroke-width="1.15"/><circle cx="38" cy="10" r="7.4" fill="none" stroke="#2777b6" stroke-width="1.1"/><circle cx="37.7" cy="6.4" r="0.75" fill="#2777b6"/><path d="M37.4,8.6 Q37.6,11 37.8,12.2 Q38.2,13.3 39.2,13.6" fill="none" stroke="#2777b6" stroke-width="1.1" stroke-linecap="round"/></svg>
<div class="a " style="left:256.30px;top:807.80px;font-size:13px;line-height:13px;letter-spacing:-0.1px">006</div>
<div class="a " style="left:336.60px;top:807.80px;font-size:13px;line-height:13px;letter-spacing:-0.15px">Dodavatel - školení 7</div>
<div class="a " style="left:539.00px;top:807.80px;font-size:13px;line-height:13px;letter-spacing:-0.1px">12345678</div>
<div class="a " style="left:639.00px;top:807.80px;font-size:13px;line-height:13px;letter-spacing:-0.15px">5. 6. 2025 13:03</div>
<div class="a " style="left:779.00px;top:807.80px;font-size:13px;line-height:13px;letter-spacing:-0.15px">Otevření zaevidováno</div>
<svg class="a" style="left:1010.4px;top:806.8px" width="12" height="12" viewBox="0 0 12 12"><path d="M2.2,2.2 L9.8,9.8 M9.8,2.2 L2.2,9.8" stroke="#d0262b" stroke-width="2"/></svg>
<svg class="a" style="left:1140.3px;top:806.8px" width="12" height="12" viewBox="0 0 12 12"><path d="M1.5,6.5 L4.6,9.3 L10.8,2.8" fill="none" stroke="#3cb043" stroke-width="2"/></svg>
<svg class="a" style="left:1301.7px;top:806.8px" width="12" height="12" viewBox="0 0 12 12"><path d="M2.2,2.2 L9.8,9.8 M9.8,2.2 L2.2,9.8" stroke="#d0262b" stroke-width="2"/></svg>
<div class="rl" style="left:181px;top:826px;width:1224.5px;background:#e2e2e2"></div>
<div style="position:absolute;left:980px;top:44.5px;width:517.5px;height:701.5px;background:#fff;border:1px solid #cdcdcd;border-top-color:#f4f4f4;border-radius:11px;box-shadow:0 4px 20px rgba(0,0,0,.13);clip-path:inset(0px -40px -40px -40px)"></div>
<div style="position:absolute;left:1002px;top:66px;width:193px;height:48px;border:1.5px solid #e0232d"></div>
<div class="a b" style="left:1006.00px;top:70.49px;font-size:18.2px;line-height:18.2px;color:#000;letter-spacing:-0.5px">Seznam generovaných</div>
<div class="a b" style="left:1006.00px;top:92.29px;font-size:18.2px;line-height:18.2px;color:#000;letter-spacing:-0.5px">dokumentů</div>
<div style="position:absolute;left:1352px;top:100px;width:137px;height:1px;background:#dedede"></div>
<div style="position:absolute;left:1360px;top:86px;width:46px;height:12px;background:linear-gradient(to bottom,rgba(31,116,180,0),rgba(31,116,180,.10))"></div>
<div style="position:absolute;left:1360px;top:98px;width:46px;height:3px;background:#1f74b4"></div>
<div class="a " style="left:1372.20px;top:74.97px;font-size:13.5px;line-height:13.5px;color:#2777b6;letter-spacing:0px;-webkit-text-stroke:0.35px #2777b6">Vše</div>
<div class="a " style="left:1418.60px;top:74.97px;font-size:13.5px;line-height:13.5px;color:#666;letter-spacing:-0.3px;-webkit-text-stroke:0.35px #666">Nedávné</div>
<div style="position:absolute;left:1481px;top:55px;width:6px;height:252px;border-radius:3px;background:#9b9b9b"></div>
<svg class="a" style="left:1005px;top:133px" width="32" height="32" viewBox="0 0 32 32"><circle cx="16" cy="16" r="16" fill="#4caf50"/><path d="M16,8.3 V16 M13.2,13.6 L16,16.4 L18.8,13.6" fill="none" stroke="#fff" stroke-width="1.4" stroke-linecap="round"/><path d="M8.6,17.5 V22.6 Q8.6,23.6 9.6,23.6 H22.4 Q23.4,23.6 23.4,22.6 V17.5 Q23.4,17 22.9,17 H20.5 Q19.8,17 19.3,17.6 Q17.9,19.3 16,19.3 Q14.1,19.3 12.7,17.6 Q12.2,17 11.5,17 H9.1 Q8.6,17 8.6,17.5 Z" fill="none" stroke="#fff" stroke-opacity=".85" stroke-width="1.3"/></svg>
<div class="a b" style="left:1053.40px;top:128.96px;font-size:12.8px;line-height:12.8px;color:#111;letter-spacing:-0.33px">Stahování předběžných nabídek</div>
<div class="a " style="right:120.00px;top:128.00px;font-size:13px;line-height:13px;color:#666;letter-spacing:-0.2px">Dokončeno</div>
<div class="a " style="left:1053.40px;top:142.90px;font-size:13px;line-height:13px;color:#666;letter-spacing:0px">N006/25/V00005292 - Řešení optimalizace dopravní obslužnosti</div>
<div class="a " style="left:1053.40px;top:158.20px;font-size:13px;line-height:13px;color:#2777b6;letter-spacing:-0.05px">Zobrazit export &gt;&gt;</div>
<svg class="a" style="left:1005px;top:189px" width="32" height="32" viewBox="0 0 32 32"><circle cx="16" cy="16" r="16" fill="#4caf50"/><path d="M16,8.3 V16 M13.2,13.6 L16,16.4 L18.8,13.6" fill="none" stroke="#fff" stroke-width="1.4" stroke-linecap="round"/><path d="M8.6,17.5 V22.6 Q8.6,23.6 9.6,23.6 H22.4 Q23.4,23.6 23.4,22.6 V17.5 Q23.4,17 22.9,17 H20.5 Q19.8,17 19.3,17.6 Q17.9,19.3 16,19.3 Q14.1,19.3 12.7,17.6 Q12.2,17 11.5,17 H9.1 Q8.6,17 8.6,17.5 Z" fill="none" stroke="#fff" stroke-opacity=".85" stroke-width="1.3"/></svg>
<div class="a b" style="left:1053.40px;top:184.96px;font-size:12.8px;line-height:12.8px;color:#111;letter-spacing:-0.33px">Stahování žádostí o účast</div>
<div class="a " style="right:120.00px;top:184.00px;font-size:13px;line-height:13px;color:#666;letter-spacing:-0.2px">Dokončeno</div>
<div class="a " style="left:1053.40px;top:198.90px;font-size:13px;line-height:13px;color:#666;letter-spacing:0px">N006/25/V00005292 - Řešení optimalizace dopravní obslužnosti</div>
<div class="a " style="left:1053.40px;top:214.20px;font-size:13px;line-height:13px;color:#2777b6;letter-spacing:-0.05px">Zobrazit export &gt;&gt;</div>
<svg class="a" style="left:1005px;top:245px" width="32" height="32" viewBox="0 0 32 32"><circle cx="16" cy="16" r="16" fill="#4caf50"/><path d="M16,8.3 V16 M13.2,13.6 L16,16.4 L18.8,13.6" fill="none" stroke="#fff" stroke-width="1.4" stroke-linecap="round"/><path d="M8.6,17.5 V22.6 Q8.6,23.6 9.6,23.6 H22.4 Q23.4,23.6 23.4,22.6 V17.5 Q23.4,17 22.9,17 H20.5 Q19.8,17 19.3,17.6 Q17.9,19.3 16,19.3 Q14.1,19.3 12.7,17.6 Q12.2,17 11.5,17 H9.1 Q8.6,17 8.6,17.5 Z" fill="none" stroke="#fff" stroke-opacity=".85" stroke-width="1.3"/></svg>
<div class="a b" style="left:1053.40px;top:240.96px;font-size:12.8px;line-height:12.8px;color:#111;letter-spacing:-0.33px">Stahování nabídek</div>
<div class="a " style="right:120.00px;top:240.00px;font-size:13px;line-height:13px;color:#666;letter-spacing:-0.2px">Dokončeno</div>
<div class="a " style="left:1053.40px;top:254.90px;font-size:13px;line-height:13px;color:#666;letter-spacing:0px">N006/25/V00005181 - Nájem serverů s technickou podporou</div>
<div class="a " style="left:1053.40px;top:270.20px;font-size:13px;line-height:13px;color:#2777b6;letter-spacing:-0.05px">Zobrazit export &gt;&gt;</div>
<svg class="a" style="left:1005px;top:301px" width="32" height="32" viewBox="0 0 32 32"><circle cx="16" cy="16" r="16" fill="#4caf50"/><path d="M16,8.3 V16 M13.2,13.6 L16,16.4 L18.8,13.6" fill="none" stroke="#fff" stroke-width="1.4" stroke-linecap="round"/><path d="M8.6,17.5 V22.6 Q8.6,23.6 9.6,23.6 H22.4 Q23.4,23.6 23.4,22.6 V17.5 Q23.4,17 22.9,17 H20.5 Q19.8,17 19.3,17.6 Q17.9,19.3 16,19.3 Q14.1,19.3 12.7,17.6 Q12.2,17 11.5,17 H9.1 Q8.6,17 8.6,17.5 Z" fill="none" stroke="#fff" stroke-opacity=".85" stroke-width="1.3"/></svg>
<div class="a b" style="left:1053.40px;top:296.96px;font-size:12.8px;line-height:12.8px;color:#111;letter-spacing:-0.33px">Stahování žádostí o účast</div>
<div class="a " style="right:120.00px;top:296.00px;font-size:13px;line-height:13px;color:#666;letter-spacing:-0.2px">Dokončeno</div>
<div class="a " style="left:1053.40px;top:310.90px;font-size:13px;line-height:13px;color:#666;letter-spacing:0px">N006/25/V00005181 - Nájem serverů s technickou podporou</div>
<div class="a " style="left:1053.40px;top:326.20px;font-size:13px;line-height:13px;color:#2777b6;letter-spacing:-0.05px">Zobrazit export &gt;&gt;</div>
<svg class="a" style="left:1005px;top:357px" width="32" height="32" viewBox="0 0 32 32"><circle cx="16" cy="16" r="16" fill="#4caf50"/><path d="M16,8.3 V16 M13.2,13.6 L16,16.4 L18.8,13.6" fill="none" stroke="#fff" stroke-width="1.4" stroke-linecap="round"/><path d="M8.6,17.5 V22.6 Q8.6,23.6 9.6,23.6 H22.4 Q23.4,23.6 23.4,22.6 V17.5 Q23.4,17 22.9,17 H20.5 Q19.8,17 19.3,17.6 Q17.9,19.3 16,19.3 Q14.1,19.3 12.7,17.6 Q12.2,17 11.5,17 H9.1 Q8.6,17 8.6,17.5 Z" fill="none" stroke="#fff" stroke-opacity=".85" stroke-width="1.3"/></svg>
<div class="a b" style="left:1053.40px;top:352.96px;font-size:12.8px;line-height:12.8px;color:#111;letter-spacing:-0.33px">Stahování nabídek</div>
<div class="a " style="right:120.00px;top:352.00px;font-size:13px;line-height:13px;color:#666;letter-spacing:-0.2px">Dokončeno</div>
<div class="a " style="left:1053.40px;top:366.90px;font-size:13px;line-height:13px;color:#666;letter-spacing:0px">N006/25/V00005136 - Realizace energetických úspor</div>
<div class="a " style="left:1053.40px;top:382.20px;font-size:13px;line-height:13px;color:#2777b6;letter-spacing:-0.05px">Zobrazit export &gt;&gt;</div>
<svg class="a" style="left:1005px;top:413px" width="32" height="32" viewBox="0 0 32 32"><circle cx="16" cy="16" r="16" fill="#4caf50"/><path d="M16,8.3 V16 M13.2,13.6 L16,16.4 L18.8,13.6" fill="none" stroke="#fff" stroke-width="1.4" stroke-linecap="round"/><path d="M8.6,17.5 V22.6 Q8.6,23.6 9.6,23.6 H22.4 Q23.4,23.6 23.4,22.6 V17.5 Q23.4,17 22.9,17 H20.5 Q19.8,17 19.3,17.6 Q17.9,19.3 16,19.3 Q14.1,19.3 12.7,17.6 Q12.2,17 11.5,17 H9.1 Q8.6,17 8.6,17.5 Z" fill="none" stroke="#fff" stroke-opacity=".85" stroke-width="1.3"/></svg>
<div class="a b" style="left:1053.40px;top:408.96px;font-size:12.8px;line-height:12.8px;color:#111;letter-spacing:-0.33px">Stahování předběžných nabídek</div>
<div class="a " style="right:120.00px;top:408.00px;font-size:13px;line-height:13px;color:#666;letter-spacing:-0.2px">Dokončeno</div>
<div class="a " style="left:1053.40px;top:422.90px;font-size:13px;line-height:13px;color:#666;letter-spacing:0px">N006/25/V00005136 - Realizace energetických úspor</div>
<div class="a " style="left:1053.40px;top:438.20px;font-size:13px;line-height:13px;color:#2777b6;letter-spacing:-0.05px">Zobrazit export &gt;&gt;</div>
<svg class="a" style="left:1005px;top:469px" width="32" height="32" viewBox="0 0 32 32"><circle cx="16" cy="16" r="16" fill="#4caf50"/><path d="M16,8.3 V16 M13.2,13.6 L16,16.4 L18.8,13.6" fill="none" stroke="#fff" stroke-width="1.4" stroke-linecap="round"/><path d="M8.6,17.5 V22.6 Q8.6,23.6 9.6,23.6 H22.4 Q23.4,23.6 23.4,22.6 V17.5 Q23.4,17 22.9,17 H20.5 Q19.8,17 19.3,17.6 Q17.9,19.3 16,19.3 Q14.1,19.3 12.7,17.6 Q12.2,17 11.5,17 H9.1 Q8.6,17 8.6,17.5 Z" fill="none" stroke="#fff" stroke-opacity=".85" stroke-width="1.3"/></svg>
<div class="a b" style="left:1053.40px;top:464.96px;font-size:12.8px;line-height:12.8px;color:#111;letter-spacing:-0.33px">Stahování nabídek</div>
<div class="a " style="right:120.00px;top:464.00px;font-size:13px;line-height:13px;color:#666;letter-spacing:-0.2px">Dokončeno</div>
<div class="a " style="left:1053.40px;top:478.90px;font-size:13px;line-height:13px;color:#666;letter-spacing:0px">N006/25/V00004995 - Zajištění závodního stravování</div>
<div class="a " style="left:1053.40px;top:494.20px;font-size:13px;line-height:13px;color:#2777b6;letter-spacing:-0.05px">Zobrazit export &gt;&gt;</div>
<svg class="a" style="left:1005px;top:525px" width="32" height="32" viewBox="0 0 32 32"><circle cx="16" cy="16" r="16" fill="#4caf50"/><path d="M16,8.3 V16 M13.2,13.6 L16,16.4 L18.8,13.6" fill="none" stroke="#fff" stroke-width="1.4" stroke-linecap="round"/><path d="M8.6,17.5 V22.6 Q8.6,23.6 9.6,23.6 H22.4 Q23.4,23.6 23.4,22.6 V17.5 Q23.4,17 22.9,17 H20.5 Q19.8,17 19.3,17.6 Q17.9,19.3 16,19.3 Q14.1,19.3 12.7,17.6 Q12.2,17 11.5,17 H9.1 Q8.6,17 8.6,17.5 Z" fill="none" stroke="#fff" stroke-opacity=".85" stroke-width="1.3"/></svg>
<div class="a b" style="left:1053.40px;top:520.96px;font-size:12.8px;line-height:12.8px;color:#111;letter-spacing:-0.33px">Stahování předběžných nabídek</div>
<div class="a " style="right:120.00px;top:520.00px;font-size:13px;line-height:13px;color:#666;letter-spacing:-0.2px">Dokončeno</div>
<div class="a " style="left:1053.40px;top:534.90px;font-size:13px;line-height:13px;color:#666;letter-spacing:0px">N006/25/V00004995 - Zajištění závodního stravování</div>
<div class="a " style="left:1053.40px;top:550.20px;font-size:13px;line-height:13px;color:#2777b6;letter-spacing:-0.05px">Zobrazit export &gt;&gt;</div>
<svg class="a" style="left:1005px;top:581px" width="32" height="32" viewBox="0 0 32 32"><circle cx="16" cy="16" r="16" fill="#4caf50"/><path d="M16,8.3 V16 M13.2,13.6 L16,16.4 L18.8,13.6" fill="none" stroke="#fff" stroke-width="1.4" stroke-linecap="round"/><path d="M8.6,17.5 V22.6 Q8.6,23.6 9.6,23.6 H22.4 Q23.4,23.6 23.4,22.6 V17.5 Q23.4,17 22.9,17 H20.5 Q19.8,17 19.3,17.6 Q17.9,19.3 16,19.3 Q14.1,19.3 12.7,17.6 Q12.2,17 11.5,17 H9.1 Q8.6,17 8.6,17.5 Z" fill="none" stroke="#fff" stroke-opacity=".85" stroke-width="1.3"/></svg>
<div class="a b" style="left:1053.40px;top:576.96px;font-size:12.8px;line-height:12.8px;color:#111;letter-spacing:-0.33px">Stahování žádostí o účast</div>
<div class="a " style="right:120.00px;top:576.00px;font-size:13px;line-height:13px;color:#666;letter-spacing:-0.2px">Dokončeno</div>
<div class="a " style="left:1053.40px;top:590.90px;font-size:13px;line-height:13px;color:#666;letter-spacing:0px">N006/25/V00004995 - Zajištění závodního stravování</div>
<div class="a " style="left:1053.40px;top:606.20px;font-size:13px;line-height:13px;color:#2777b6;letter-spacing:-0.05px">Zobrazit export &gt;&gt;</div>
<svg class="a" style="left:1005px;top:637px" width="32" height="32" viewBox="0 0 32 32"><circle cx="16" cy="16" r="16" fill="#4caf50"/><path d="M16,8.3 V16 M13.2,13.6 L16,16.4 L18.8,13.6" fill="none" stroke="#fff" stroke-width="1.4" stroke-linecap="round"/><path d="M8.6,17.5 V22.6 Q8.6,23.6 9.6,23.6 H22.4 Q23.4,23.6 23.4,22.6 V17.5 Q23.4,17 22.9,17 H20.5 Q19.8,17 19.3,17.6 Q17.9,19.3 16,19.3 Q14.1,19.3 12.7,17.6 Q12.2,17 11.5,17 H9.1 Q8.6,17 8.6,17.5 Z" fill="none" stroke="#fff" stroke-opacity=".85" stroke-width="1.3"/></svg>
<div class="a b" style="left:1053.40px;top:632.96px;font-size:12.8px;line-height:12.8px;color:#111;letter-spacing:-0.33px">Stahování předběžných zájmů</div>
<div class="a " style="right:120.00px;top:632.00px;font-size:13px;line-height:13px;color:#666;letter-spacing:-0.2px">Dokončeno</div>
<div class="a " style="left:1053.40px;top:646.90px;font-size:13px;line-height:13px;color:#666;letter-spacing:0px">N006/25/V00004995 - Zajištění závodního stravování</div>
<div class="a " style="left:1053.40px;top:662.20px;font-size:13px;line-height:13px;color:#2777b6;letter-spacing:-0.05px">Zobrazit export &gt;&gt;</div>
<div style="position:absolute;left:1050px;top:156.4px;width:114px;height:18.2px;border:1.3px solid #e0232d"></div>
<div class="a " style="left:1200.40px;top:702.40px;font-size:13px;line-height:13px;color:#555;letter-spacing:-0.2px">Zobrazit vše</div>
</body></html>
